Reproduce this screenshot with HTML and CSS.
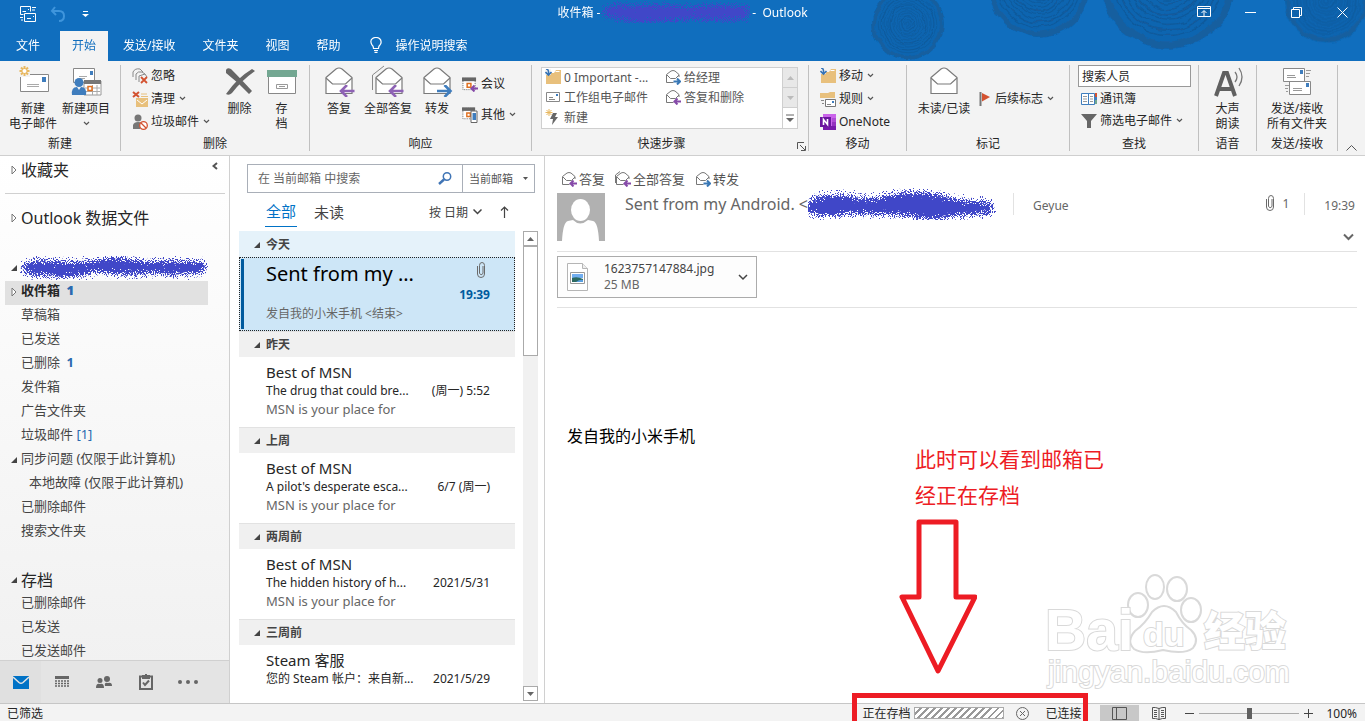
FILE: index.html
```html
<!DOCTYPE html>
<html lang="zh-CN">
<head>
<meta charset="utf-8">
<meta name="viewport" content="width=device-width, initial-scale=1">
<title>收件箱 - Outlook</title>
<link rel="stylesheet" href="styles.css">
</head>
<body>
<svg class="sprite" aria-hidden="true">
  <defs>
    <filter id="spray" x="-5%" y="-40%" width="110%" height="180%">
      <feTurbulence type="fractalNoise" baseFrequency="0.9" numOctaves="2" seed="4"/>
      <feDisplacementMap in="SourceGraphic" scale="22" xChannelSelector="R" yChannelSelector="G"/>
    </filter>
    <filter id="wobble" x="-10%" y="-10%" width="120%" height="120%">
      <feTurbulence type="fractalNoise" baseFrequency="0.06" numOctaves="3" seed="7"/>
      <feDisplacementMap in="SourceGraphic" scale="7" xChannelSelector="R" yChannelSelector="G"/>
    </filter>
    <g id="rings" fill="none" stroke="#125a9c">
      <circle r="50" fill="#1165b0" stroke="none"/>
      <circle r="47" stroke="#145f9f" stroke-width="5"/><circle r="40"/><circle r="36" stroke-width="1.500"/><circle r="32"/><circle r="28"/><circle r="25" stroke-width="1.500"/><circle r="21"/><circle r="17"/><circle r="14"/><circle r="10" stroke-width="1.500"/><circle r="6"/><circle r="3"/>
    </g>
    <symbol id="open-mail" viewBox="0 0 32 32">
      <path d="M3 12.5 13 4q3-2 6 0l10 8.500V28.500H3z" fill="#fff" stroke="#7a7a7a" stroke-width="1.200"/>
      <path d="m3 13 6.500 6h13L29 13" fill="none" stroke="#7a7a7a" stroke-width="1.200"/>
    </symbol>
    <symbol id="arrow-left" viewBox="0 0 16 12"><path d="M15.500 6H3M8 0 2 6l6 6" fill="none" stroke="#8e62b5" stroke-width="2.600"/></symbol>
    <symbol id="arrow-right" viewBox="0 0 16 12"><path d="M.5 6H13M8 0l6 6-6 6" fill="none" stroke="#3f7dbd" stroke-width="2.600"/></symbol>
    <symbol id="mail-sm" viewBox="0 0 16 16"><path d="M1.500 5.500 6 2q2-1 4 0l4 3.500V8M1.500 5.500v8h7M2 6l3.500 3.500h5L14 6" fill="none" stroke="#777"/></symbol>
    <symbol id="reply-sm" viewBox="0 0 16 16"><use href="#mail-sm"/><path d="M16 12.500h-5M12.500 9.500l-3 3 3 3" fill="none" stroke="#8549a8" stroke-width="2"/></symbol>
    <symbol id="forward-sm" viewBox="0 0 16 16"><use href="#mail-sm"/><path d="M8.500 12.500h6M12 9.500l3 3-3 3" fill="none" stroke="#3877b5" stroke-width="2"/></symbol>
    <symbol id="chev" viewBox="0 0 7 7"><path d="m1 2 2.500 2.500L6 2" fill="none" stroke="#555" stroke-width="1.200"/></symbol>
    <symbol id="folder" viewBox="0 0 16 16"><path d="M1 4h8l2-3h5v14H1z" fill="#e8c07c"/><path d="M10.500 2.500h4" stroke="#fff"/><path d="M0 0h6v6H0z" fill="#f3f3f3"/><path d="M1 0q3 0 2.500 5M.5 3l3 3 3-3" fill="none" stroke="#3673b5" stroke-width="1.600"/></symbol>
    <symbol id="open-tri" viewBox="0 0 6 10"><path d="m1 1 4 4-4 4z" fill="#fff" stroke="#777"/></symbol>
    <symbol id="closed-tri" viewBox="0 0 6 6"><path d="M6 0v6H0z" fill="#444"/></symbol>
    <symbol id="clip" viewBox="0 0 8 16"><path d="M6 4v7.500q-2 2.500-3.500 0V3.500q0-3 2.500-3t2.500 3V12q0 3.500-3.500 3.500T.5 12V4" fill="none" stroke="#6a6a6a"/></symbol>
    <symbol id="calendar" viewBox="0 0 16 14"><path d="M1 1h13v12H1z" fill="#fff" stroke="#666" stroke-dasharray="1 1"/><path d="M0 0h15v4H0z" fill="#666"/><path d="M5.500 6.500h4v4h-4z" fill="#fff" stroke="#e07020" stroke-width="1.600"/></symbol>
  </defs>
</svg>

<header class="top">
  <svg class="wood" viewBox="0 0 500 61" aria-hidden="true">
    <g filter="url(#wobble)">
      <use href="#rings" transform="translate(43 24) scale(.72)"/>
      <use href="#rings" transform="translate(174 -14) scale(1.02)"/>
      <use href="#rings" transform="translate(303 -19) scale(1.36)"/>
      <use href="#rings" transform="translate(462 1) scale(.83)"/>
    </g>
  </svg>
  <div class="titlebar">
    <div class="quick">
      <button aria-label="发送/接收"><svg width="16" height="16" viewBox="0 0 16 16" fill="none" stroke="#fff"><path d="M.5.5h10v5M.5.5v8h3M8 3.500h1M2.500 5.500H6M4.500 7.500h11v8h-11zM13 10.500h1M7 12.500h4M12 1.500h4M12 4h3M0 11.500h3M1 14h2"/></svg></button>
      <button aria-label="撤消"><svg width="16" height="16" viewBox="0 0 16 16" fill="none" stroke="#3f95dc" stroke-width="2"><path d="M5 1 2 5l4 4M2 5h7q5 0 5 5t-5 5"/></svg></button>
      <button aria-label="自定义"><svg width="7" height="8" viewBox="0 0 7 8"><path d="M1 1.500h5" stroke="#fff"/><path d="M0 4h7L3.500 7z" fill="#fff"/></svg></button>
    </div>
    <div class="title"><span>收件箱 -</span><svg width="150" height="22" viewBox="0 0 150 22" aria-hidden="true"><path d="M0 11Q10 1 32 5q30-3 55 1 30-4 59 0 6 7-2 12-22 3-54 0-30 4-53 3Q10 20 0 11z" fill="#4046c8" filter="url(#spray)"/></svg><span>-&nbsp; Outlook</span></div>
    <div class="winctl">
      <button aria-label="功能区显示选项"><svg width="14" height="12" viewBox="0 0 14 12" fill="none" stroke="#fff"><path d="M.5.5h13v10H.5zM.5 2.500h13M7 10V5M4.500 7 7 4.500 9.500 7"/></svg></button>
      <button aria-label="最小化"><svg width="11" height="11"><path d="M0 5.500h11" stroke="#fff"/></svg></button>
      <button aria-label="还原"><svg width="11" height="11" viewBox="0 0 11 11" fill="none" stroke="#fff"><path d="M.5 2.500h8v8h-8zM2.500 2.500v-2h8v8h-2"/></svg></button>
      <button aria-label="关闭"><svg width="11" height="11" viewBox="0 0 11 11"><path d="m.5.5 10 10m0-10-10 10" stroke="#fff"/></svg></button>
    </div>
  </div>
  <nav class="tabs">
    <button>文件</button><button class="active">开始</button><button>发送/接收</button><button>文件夹</button><button>视图</button><button>帮助</button>
    <button class="tell"><svg width="12" height="16" viewBox="0 0 12 16" fill="none" stroke="#fff" stroke-width="1.200"><path d="M3.500 11.500Q3.500 9 2 8-.5 3.500 2.500 1.500q3.500-2 7 0Q12.500 4.500 10 8 8.500 9 8.500 11.500zM4 13.500h4M4.500 15.300h3"/></svg>操作说明搜索</button>
  </nav>
</header>

<section class="ribbon">
  <div class="group g-new">
    <div class="tools">
      <button class="big"><svg viewBox="0 0 32 32"><path d="M3.500 9.500h28v17h-28z" fill="#fff" stroke="#888"/><path d="M25 12h4v5h-4z" fill="#3f7dbd"/><path d="M10 19.500h12M10 21.500h12" stroke="#aaa"/><path d="M2 0h11v12H2z" fill="#f3f3f3"/><path d="M7.500 1v10M2.500 6h10M4 2.500l7 7M11 2.500l-7 7" stroke="#e8b860" stroke-width="2"/><circle cx="7.500" cy="6" r="2" fill="#fff"/></svg>新建<br>电子邮件</button>
      <button class="big"><svg viewBox="0 0 32 32"><path d="M3.500 3.500h21v14h-21z" fill="#fff" stroke="#888"/><path d="M20 6h3v4h-3z" fill="#3f7dbd"/><path d="M9 11.500h8M9 13.500h6" stroke="#aaa"/><path d="M14 16h17v14H14z" fill="#fff" stroke="#999"/><path d="M14 15h17v4H14z" fill="#777"/><path d="M15 23h15M15 26.500h15M22.500 20v10M27 20v10" stroke="#aaa"/><path d="M18 21.500h4v4h-4z" fill="#fff" stroke="#e07020" stroke-width="1.500"/><circle cx="9" cy="17.500" r="4.500" fill="#3f7dbd"/><path d="M2 30q-1-8 5-8l2 3 2-3q6 0 5 8z" fill="#3f7dbd"/></svg>新建项目<svg class="chev"><use href="#chev"/></svg></button>
    </div>
    <div class="label">新建</div>
  </div>
  <div class="group g-del">
    <div class="tools">
      <div class="stack">
        <button><svg class="ic" viewBox="0 0 16 16"><path d="M1 9V4q2-4 7-3l3 3M4 12V6q2-3 6-2l3 2M7 14V8l6-2 2 3" fill="none" stroke="#888"/><path d="m9 9 6 6m0-6-6 6" stroke="#d35230" stroke-width="1.800"/></svg>忽略</button>
        <button><svg class="ic" viewBox="0 0 16 16"><path d="M4 7h12v9H4z" fill="#e8c07c"/><path d="M5 9l5 4 5-4" fill="none" stroke="#fff"/><path d="M9 3h6M9 5.500h7" stroke="#e8c07c"/><path d="m1 1 6 5M7 1 1 6" stroke="#d35230" stroke-width="2"/></svg>清理<svg class="chev"><use href="#chev"/></svg></button>
        <button><svg class="ic" viewBox="0 0 16 16"><circle cx="6" cy="4" r="3.500" fill="#777"/><path d="M1 15V11q1-3 5-3 3 0 4 1l-2 6z" fill="#777"/><circle cx="11.500" cy="11.500" r="3.800" fill="#fff" stroke="#d35230" stroke-width="1.300"/><path d="m9 9 5 5" stroke="#d35230" stroke-width="1.300"/></svg>垃圾邮件<svg class="chev"><use href="#chev"/></svg></button>
      </div>
      <button class="big"><svg viewBox="0 0 32 32"><path d="M2 5q1-3 5-1 9 9 21 22l-3 3Q15 18 2 8zM31 6Q18 15 8 28q-3 3-6 1Q13 13 28 4z" fill="#666"/></svg>删除</button>
      <button class="big"><svg viewBox="0 0 32 32"><path d="M2.500 9.500h27v19h-27z" fill="#fff" stroke="#888"/><path d="M1 5h30v7H1z" fill="#73a792"/><path d="M10.500 19.500h11v4h-11zM13 21.500h6" fill="none" stroke="#999"/></svg>存<br>档</button>
    </div>
    <div class="label">删除</div>
  </div>
  <div class="group g-resp">
    <div class="tools">
      <button class="big"><svg viewBox="0 0 32 32"><use href="#open-mail"/><use href="#arrow-left" x="16" y="20" width="16" height="12"/></svg>答复</button>
      <button class="big"><svg viewBox="0 0 32 32"><path d="M.5 25V10L12 1" fill="none" stroke="#888"/><use href="#open-mail" x="1"/><use href="#arrow-left" x="16" y="20" width="16" height="12"/></svg>全部答复</button>
      <button class="big"><svg viewBox="0 0 32 32"><use href="#open-mail"/><use href="#arrow-right" x="15" y="20" width="17" height="12"/></svg>转发</button>
      <div class="stack wide">
        <button><svg class="ic" viewBox="0 0 16 16"><use href="#calendar" width="15" height="14" y="1"/><path d="M16 12.500h-5M12.500 9.500l-3 3 3 3" fill="none" stroke="#8549a8" stroke-width="2"/></svg>会议</button>
        <button><svg class="ic" viewBox="0 0 16 16"><use href="#calendar" width="14" height="13"/><path d="M9 4h6v11.500H9z" fill="#fff" stroke="#666"/><path d="M10.500 6h3.500v7h-3.500z" fill="#3f7dbd"/></svg>其他<svg class="chev"><use href="#chev"/></svg></button>
      </div>
    </div>
    <div class="label">响应</div>
  </div>
  <div class="group g-quick">
    <div class="tools">
      <div class="gallery">
        <div class="steps">
          <button><svg class="ic"><use href="#folder"/></svg>0 Important -...</button>
          <button><svg class="ic"><use href="#forward-sm"/></svg>给经理</button>
          <button><svg class="ic" viewBox="0 0 16 16"><path d="M1.500 3.500h13v9h-13zM4 8.500h4M4 10.500h6" fill="#fff" stroke="#888"/><path d="M11 5h2v2h-2z" fill="#3f7dbd"/></svg>工作组电子邮件</button>
          <button><svg class="ic"><use href="#reply-sm"/></svg>答复和删除</button>
          <button><svg class="ic" viewBox="0 0 16 16"><path d="M4 0v7M.5 3.500h7M1.500 1l5 5M6.500 1l-5 5" stroke="#e8b860"/><path d="M8 4h4l-2 4h3l-6 8 1-6H5z" fill="#666"/></svg>新建</button>
        </div>
        <div class="spin">
          <button aria-label="上一行"><svg width="7" height="4"><path d="M0 4h7L3.500 0z" fill="#bbb"/></svg></button>
          <button aria-label="下一行"><svg width="7" height="4"><path d="M0 0h7L3.500 4z" fill="#bbb"/></svg></button>
          <button aria-label="其他"><svg width="8" height="8"><path d="M0 1h8" stroke="#666"/><path d="M0 4h8L4 8z" fill="#666"/></svg></button>
        </div>
      </div>
    </div>
    <div class="label">快速步骤</div>
    <button class="launch" aria-label="管理快速步骤"><svg width="9" height="9" viewBox="0 0 9 9" fill="none" stroke="#555"><path d="M.5 7V.5H7M3 3l5 5M8.500 4v4.500H4"/></svg></button>
  </div>
  <div class="group g-move">
    <div class="tools">
      <div class="stack">
        <button><svg class="ic"><use href="#folder"/></svg>移动<svg class="chev"><use href="#chev"/></svg></button>
        <button><svg class="ic" viewBox="0 0 16 16"><path d="M0 2h8l2-1h5v6H0z" fill="#e8c07c"/><path d="M5.500 8.500h10v7h-10z" fill="#fff" stroke="#777"/><path d="M12 10h2v2h-2z" fill="#3f7dbd"/><path d="M1 9.500h3M2 12.500h2M7 13.500h4" stroke="#888"/></svg>规则<svg class="chev"><use href="#chev"/></svg></button>
        <button><svg class="ic" viewBox="0 0 16 16"><path d="M3 0h13v16H3z" fill="#ca64ea"/><path d="M12 4h4v4h-4z" fill="#ae4bd5"/><path d="M12 8h4v4h-4z" fill="#9332bf"/><path d="M3 12h13v4H3z" fill="#7719aa"/><path d="M0 3h11v10H0z" fill="#6b169e"/><path d="M3.500 11V5.500l4 5V5" fill="none" stroke="#fff" stroke-width="1.600"/></svg>OneNote</button>
      </div>
    </div>
    <div class="label">移动</div>
  </div>
  <div class="group g-tag">
    <div class="tools">
      <button class="big"><svg viewBox="0 0 32 32"><use href="#open-mail"/></svg>未读/已读</button>
      <div class="stack mid">
        <button><svg class="ic" viewBox="0 0 16 16"><path d="M2.500 1v14" stroke="#777" stroke-width="2"/><path d="m4 2 8 4-8 4.500z" fill="#d35230"/></svg>后续标志<svg class="chev"><use href="#chev"/></svg></button>
      </div>
    </div>
    <div class="label">标记</div>
  </div>
  <div class="group g-find">
    <div class="tools">
      <div class="stack">
        <input class="people" type="text" value="搜索人员" aria-label="搜索人员">
        <button><svg class="ic" viewBox="0 0 16 16"><path d="M.5 2.500h7v11h-7zM7.500 2.500h6v11h-6z" fill="#fff" stroke="#3f7dbd"/><path d="M2 5.500h4M2 8h4M2 10.500h4M9 5.500h3M9 8h3M9 10.500h3" stroke="#999"/><path d="M15 2v4" stroke="#d35230" stroke-width="2"/><path d="M15 6v3" stroke="#3f7dbd" stroke-width="2"/><path d="M15 9v4" stroke="#73a792" stroke-width="2"/></svg>通讯簿</button>
        <button><svg class="ic" viewBox="0 0 16 16"><path d="M0 1h16L10 8v7H6V8z" fill="#666"/></svg>筛选电子邮件<svg class="chev"><use href="#chev"/></svg></button>
      </div>
    </div>
    <div class="label">查找</div>
  </div>
  <div class="group g-voice">
    <div class="tools">
      <button class="big"><svg viewBox="0 0 32 32"><path d="M4 31 12 8h3l8 23m-17-7h15" fill="none" stroke="#606060" stroke-width="4"/><path d="M23 7q4 5 0 10M27 3q6 9 0 18" fill="none" stroke="#777" stroke-width="1.300"/></svg>大声<br>朗读</button>
    </div>
    <div class="label">语音</div>
  </div>
  <div class="group g-send">
    <div class="tools">
      <button class="big"><svg viewBox="0 0 32 32" fill="none"><path d="M2.500 3.500h21v13h-21zM8.500 16.500h21v13h-21z" fill="#fff" stroke="#888"/><path d="M19 5h3v4h-3zM25 18h3v4h-3z" fill="#3f7dbd"/><path d="M6 10.500h8M6 12.500h9M12 23.500h9M12 25.500h9M25 5.500h5M25 8.500h4M25 11.500h3M4 20.500h4M4 23.500h3M5 26.500h2" stroke="#999"/></svg>发送/接收<br>所有文件夹</button>
    </div>
    <div class="label">发送/接收</div>
  </div>
  <button class="collapse" aria-label="折叠功能区"><svg width="11" height="6"><path d="M.5 5.500 5.500.5l5 5" fill="none" stroke="#555"/></svg></button>
</section>

<main class="work">
  <aside class="folders">
    <div class="tree">
      <div class="head fav"><svg class="tri"><use href="#open-tri"/></svg>收藏夹<button class="fold" aria-label="最小化文件夹窗格"><svg width="6" height="8"><path d="M5 1 1.500 4 5 7" fill="none" stroke="#555" stroke-width="2"/></svg></button></div>
      <div class="head data"><svg class="tri"><use href="#open-tri"/></svg>Outlook 数据文件</div>
      <div class="head account"><svg class="tri"><use href="#closed-tri"/></svg><svg width="188" height="24" viewBox="0 0 188 24" aria-hidden="true"><path d="M0 12Q8 2 38 5q22 3 48-3 20-1 40 4 22-3 58 0 6 8-2 11-30 3-48 0-30 4-58-1-20 7-48 4Q5 21 0 12z" fill="#4046c8" filter="url(#spray)"/></svg></div>
      <ul>
        <li class="sel"><a href="#inbox"><svg class="tri"><use href="#open-tri"/></svg>收件箱 <b>1</b></a></li>
        <li><a href="#draft">草稿箱</a></li>
        <li><a href="#sent">已发送</a></li>
        <li><a href="#deleted">已删除 <b>1</b></a></li>
        <li><a href="#outbox">发件箱</a></li>
        <li><a href="#ads">广告文件夹</a></li>
        <li><a href="#junk">垃圾邮件 <i>[1]</i></a></li>
        <li><a href="#sync"><svg class="tri"><use href="#closed-tri"/></svg>同步问题 (仅限于此计算机)</a></li>
        <li class="child"><a href="#local">本地故障 (仅限于此计算机)</a></li>
        <li><a href="#deleted-mail">已删除邮件</a></li>
        <li><a href="#search">搜索文件夹</a></li>
      </ul>
      <div class="head archive"><svg class="tri"><use href="#closed-tri"/></svg>存档</div>
      <ul>
        <li><a href="#a1">已删除邮件</a></li>
        <li><a href="#a2">已发送</a></li>
        <li><a href="#a3">已发送邮件</a></li>
      </ul>
    </div>
    <nav class="modules">
      <button class="on" aria-label="邮件"><svg width="16" height="13"><path d="M0 0h16v13H0z" fill="#0072c6"/><path d="m0 1 6 5.500q2 1.500 4 0L16 1" fill="none" stroke="#e4e4e4" stroke-width="1.500"/></svg></button>
      <button aria-label="日历"><svg width="14" height="12"><path d="M0 1.500h14" stroke="#666" stroke-width="3"/><path d="M0 5h14M0 7.500h14M0 10h14" stroke="#666" stroke-width="1.500" stroke-dasharray="2 1"/></svg></button>
      <button aria-label="联系人"><svg width="16" height="12" fill="#666"><circle cx="4" cy="4.500" r="2.500"/><circle cx="11" cy="3" r="3"/><path d="M0 12q0-5 4-4 4-1 4 4zM9 10q-1-4 3-3 4-1 4 3z"/></svg></button>
      <button aria-label="任务"><svg width="14" height="16" fill="none" stroke="#666" stroke-width="2"><path d="M4 2.500H1V15h12V2.500h-3M4 8.500l2 2.500 4-4.500"/><path d="M4 2h6v2H4zM7 0v2"/></svg></button>
      <button aria-label="更多"><svg width="20" height="4" fill="#666"><circle cx="2" cy="2" r="2"/><circle cx="10" cy="2" r="2"/><circle cx="18" cy="2" r="2"/></svg></button>
    </nav>
  </aside>

  <section class="list">
    <div class="search">
      <input type="search" placeholder="在 当前邮箱 中搜索" aria-label="在 当前邮箱 中搜索">
      <button class="glass" aria-label="搜索"><svg width="14" height="13" fill="none" stroke="#3f74b5"><circle cx="9" cy="4.500" r="3.700" stroke-width="1.500"/><path d="M6 7.500 1 12" stroke-width="2.400"/></svg></button>
      <button class="scope">当前邮箱<svg width="5" height="3"><path d="M0 0h5L2.500 3z" fill="#555"/></svg></button>
    </div>
    <div class="filter">
      <button class="on">全部</button><button>未读</button>
      <button class="sort">按 日期<svg width="9" height="6"><path d="m.5.5 4 4 4-4" fill="none" stroke="#444" stroke-width="1.500"/></svg></button>
      <button class="dir" aria-label="升序"><svg width="9" height="12"><path d="M4.500 12V1M1 4.500 4.500 1 8 4.500" fill="none" stroke="#444" stroke-width="1.200"/></svg></button>
    </div>
    <div class="scroller">
      <div class="mails">
        <div class="day today"><svg class="tri"><use href="#closed-tri"/></svg>今天</div>
        <article class="mail current"><h3>Sent from my ...</h3><svg class="att" width="8" height="16"><use href="#clip"/></svg><time>19:39</time><p>发自我的小米手机 &lt;结束&gt;</p></article>
        <div class="day"><svg class="tri"><use href="#closed-tri"/></svg>昨天</div>
        <article class="mail"><h3>Best of MSN</h3><div class="row"><span>The drug that could bre...</span><time>(周一) 5:52</time></div><p>MSN is your place for</p></article>
        <div class="day"><svg class="tri"><use href="#closed-tri"/></svg>上周</div>
        <article class="mail"><h3>Best of MSN</h3><div class="row"><span>A pilot's desperate esca...</span><time>6/7 (周一)</time></div><p>MSN is your place for</p></article>
        <div class="day"><svg class="tri"><use href="#closed-tri"/></svg>两周前</div>
        <article class="mail"><h3>Best of MSN</h3><div class="row"><span>The hidden history of h...</span><time>2021/5/31</time></div><p>MSN is your place for</p></article>
        <div class="day"><svg class="tri"><use href="#closed-tri"/></svg>三周前</div>
        <article class="mail"><h3>Steam 客服</h3><div class="row"><span>您的 Steam 帐户：来自新...</span><time>2021/5/29</time></div></article>
      </div>
      <div class="bar">
        <button aria-label="向上滚动"><svg width="7" height="4"><path d="M0 4h7L3.500 0z" fill="#666"/></svg></button>
        <div class="thumb"></div>
        <button class="down" aria-label="向下滚动"><svg width="7" height="4"><path d="M0 0h7L3.500 4z" fill="#666"/></svg></button>
      </div>
    </div>
  </section>

  <section class="reader">
    <div class="actions">
      <button><svg class="ic"><use href="#reply-sm"/></svg>答复</button>
      <button><svg class="ic" viewBox="0 0 16 16"><path d="M.5 12V4L5 .5" fill="none" stroke="#777"/><use href="#reply-sm"/></svg>全部答复</button>
      <button><svg class="ic"><use href="#forward-sm"/></svg>转发</button>
    </div>
    <div class="mailhead">
      <svg class="avatar" viewBox="0 0 48 48" aria-hidden="true"><path d="M0 0h48v48H0z" fill="#b1b1b1"/><ellipse cx="23.500" cy="17" rx="9.500" ry="11" fill="#fff"/><path d="M5 48Q6 29 11 28l5-1q7 7 15 0l5 1q5 1 6 20z" fill="#fff"/></svg>
      <div class="from"><span>Sent from my Android. &lt;</span><svg width="188" height="32" viewBox="0 0 188 32" aria-hidden="true"><path d="M-4 18Q8 4 36 7q20 6 40 1 30-8 58 0 20 6 47 5 6 6 2 13-22 1-40 3-22 5-43-1-28-2-56-2-26 4-38 0Q-2 25-4 18z" fill="#4046c8" filter="url(#spray)"/></svg></div>
      <div class="to">Geyue</div>
      <div class="count"><svg width="8" height="16"><use href="#clip"/></svg>1</div>
      <time>19:39</time>
      <button class="expand" aria-label="展开"><svg width="11" height="8"><path d="m1 1.500 4.500 4.500L10 1.500" fill="none" stroke="#666" stroke-width="2"/></svg></button>
    </div>
    <div class="files">
      <button class="file">
        <svg width="21" height="28" viewBox="0 0 21 28"><path d="M.5.5h15l5 5v22H.5z" fill="#fff" stroke="#b5b5b5"/><path d="M15.500.5v5h5" fill="#eee" stroke="#b5b5b5"/><path d="M3.500 9.500h14v11h-14z" fill="#fff" stroke="#999"/><path d="M5 11h11v4H5z" fill="#72aef0"/><path d="M5 15q5-2 11 1v3H5z" fill="#2c6a62"/><path d="M9 19q4-3 7-2v2z" fill="#5a9fe0"/></svg>
        <span class="meta"><span>1623757147884.jpg</span><small>25 MB</small></span>
        <svg width="10" height="7"><path d="m1 1 4 4 4-4" fill="none" stroke="#444" stroke-width="1.500"/></svg>
      </button>
    </div>
    <p class="text">发自我的小米手机</p>

    <div class="note">
      <p>此时可以看到邮箱已<br>经正在存档</p>
      <svg width="78" height="158" viewBox="0 0 78 158" aria-hidden="true"><path d="M20 3h37v75h19L39 152 3 78h17z" fill="none" stroke="#ed1c24" stroke-width="5" stroke-linejoin="round"/></svg>
    </div>
    <svg class="mark" width="250" height="122" viewBox="0 0 250 122" aria-label="Baidu 经验 jingyan.baidu.com">
      <g fill="#fff" stroke="#d9d9d9" stroke-width="2">
        <ellipse cx="110" cy="16" rx="9" ry="12"/><ellipse cx="132" cy="18" rx="10" ry="12"/><ellipse cx="93" cy="34" rx="10" ry="12"/><ellipse cx="146" cy="39" rx="10" ry="12"/>
        <path d="M90 60q10-7 17-19 12-12 24 0 6 12 15 18 9 9 2 18-9 7-30 2-20 5-29-1-8-8 1-18z"/>
      </g>
      <g class="logo"><text x="0" y="79" font-size="57" font-weight="700">Bai</text><text x="98" y="75" font-size="34" font-weight="700">du</text></g>
      <text class="cn" x="159" y="75" font-size="41">经验</text>
      <text class="url" x="3" y="111" font-size="30">jingyan.baidu.com</text>
    </svg>
  </section>
</main>

<footer class="status">
  <span>已筛选</span>
  <div class="sync">
    <span>正在存档</span>
    <span class="progress" role="progressbar" aria-label="正在存档"></span>
    <button aria-label="取消"><svg width="13" height="13" fill="none" stroke="#666"><circle cx="6.500" cy="6.500" r="6"/><path d="m4 4 5 5m0-5-5 5"/></svg></button>
    <span>已连接</span>
    <div class="frame"></div>
  </div>
  <button class="view on" aria-label="普通"><svg width="15" height="13" fill="none" stroke="#555"><path d="M.5.5h14v12H.5zM4.500.5v12"/></svg></button>
  <button class="view" aria-label="阅读"><svg width="14" height="13" fill="none" stroke="#555"><path d="M7 1.500Q3 0 .5.500v11q3-.5 6.500 1 3.500-1.500 6.500-1V.5Q10 0 7 1.500zV13M2 3.500h3M2 5.500h3M2 7.500h3M2 9.500h3M9 3.500h3M9 5.500h3M9 7.500h3M9 9.500h3"/></svg></button>
  <div class="zoom">
    <button aria-label="缩小"><svg width="9" height="9"><path d="M0 4.500h9" stroke="#444"/></svg></button>
    <input type="range" min="0" max="100" value="50" aria-label="缩放">
    <button aria-label="放大"><svg width="9" height="9"><path d="M0 4.500h9M4.500 0v9" stroke="#444"/></svg></button>
  </div>
  <span class="pct">100%</span>
</footer>
</body>
</html>
```

FILE: styles.css
```css
* { box-sizing: border-box; }
html, body { height: 100%; }
body {
  margin: 0;
  display: flex;
  flex-direction: column;
  overflow: hidden;
  font: 12px/15px "Noto Sans", "Noto Sans CJK SC", sans-serif;
  color: #262626;
  background: #fff;
}
button {
  display: inline-flex;
  align-items: center;
  justify-content: center;
  margin: 0;
  padding: 0;
  border: 0;
  background: none;
  font: inherit;
  color: inherit;
  white-space: nowrap;
}
h3, p, ul { margin: 0; padding: 0; font-weight: 400; }
ul { list-style: none; }
a { color: inherit; text-decoration: none; }
svg { flex: none; display: block; }
.sprite { position: absolute; width: 0; height: 0; }
.ic { width: 16px; height: 16px; margin-right: 3px; }
.chev { width: 7px; height: 7px; margin-left: 4px; }

/* Title bar and tabs */
.top { position: relative; overflow: hidden; background: #106ebe; color: #fff; }
.wood { position: absolute; top: 0; right: 0; width: 500px; height: 61px; }
.titlebar { position: relative; display: grid; grid-template-columns: 1fr auto 1fr; align-items: center; height: 31px; padding-bottom: 7px; }
.quick { display: flex; align-items: center; gap: 14px; padding: 4px 0 0 20px; }
.quick button:last-child { margin-left: 2px; }
.title { display: flex; align-items: center; gap: 1px; }
.winctl { display: flex; justify-content: flex-end; }
.winctl button { width: 46px; height: 24px; }
.tabs { position: relative; display: flex; gap: 1px; height: 30px; padding: 0 3px; }
.tabs button { padding: 0 13px 2px; }
.tabs .active { margin-left: 6px; padding: 0 12px 2px; background: #f3f3f3; color: #106ebe; }
.tabs button:nth-child(3) { margin-left: 1px; }
.tabs .tell { gap: 14px; margin-left: 2px; }

/* Ribbon */
.ribbon { display: flex; padding: 4px 0; background: #f3f3f3; border-bottom: 1px solid #cfcfcf; flex: none; }
.group { position: relative; display: flex; flex-direction: column; flex: none; height: 86px; border-right: 1px solid #c0c0c0; }
.tools { display: flex; align-items: flex-start; flex: none; height: 71px; }
.label { text-align: center; line-height: 16px; }
.big { display: block; text-align: center; line-height: 15px; }
.big > svg:first-child { width: 32px; height: 32px; margin: 0 auto 4px; }
.big .chev { margin: 4px auto 0; }
.stack { display: flex; flex-direction: column; gap: 2px; }
.stack button { justify-content: flex-start; height: 21px; }
.stack.wide { gap: 10px; padding-top: 8px; }
.stack.mid { padding-top: 23px; }
.g-new { width: 121px; }
.g-new .tools { padding-left: 8px; gap: 3px; }
.g-new .big { width: 50px; }
.g-del { width: 189px; }
.g-del .tools { padding-left: 11px; }
.g-del .stack { width: 90px; }
.g-del .big { width: 35px; }
.g-del .big:last-child { margin-left: 7px; }
.g-resp { width: 222px; }
.g-resp .tools { padding-left: 11px; }
.g-resp .big { width: 36px; }
.g-resp .big:nth-child(2) { width: 62px; }
.g-resp .stack { margin-left: 7px; }
.g-quick { width: 277px; }
.g-quick .tools { padding: 2px 10px 0 9px; }
.g-quick .label { padding-right: 17px; }
.gallery { display: flex; width: 100%; height: 62px; background: #fff; border: 1px solid #cfcfcf; }
.steps { flex: 1; display: grid; grid-template-columns: 120px 1fr; grid-auto-rows: 20px; color: #555; padding-left: 3px; }
.steps button { justify-content: flex-start; padding-bottom: 2px; }
.spin { width: 15px; display: grid; grid-template-rows: 1fr 1fr 1fr; border-left: 1px solid #cfcfcf; }
.spin button { background: #e8e8e8; border-bottom: 1px solid #cfcfcf; }
.spin button:last-child { background: #fff; border-bottom: 0; }
.launch { position: absolute; right: 2px; bottom: 0; }
.g-move { width: 98px; }
.g-move .tools { padding-left: 11px; }
.g-tag { width: 163px; }
.g-tag .tools { padding-left: 8px; }
.g-tag .big { width: 58px; }
.g-tag .stack { margin-left: 5px; }
.g-tag .ic { margin-right: 1px; }
.g-find { width: 129px; }
.g-find .tools { padding-left: 8px; }
.g-find .stack { gap: 1px; }
.g-find .stack button { padding-left: 3px; }
.people { width: 113px; height: 22px; padding: 0 3px; border: 1px solid #999; background: #fff; font: inherit; color: inherit; }
.g-voice { width: 58px; }
.g-send { width: 81px; }
.g-voice .tools, .g-send .tools { justify-content: center; }
.collapse { margin-left: auto; align-self: flex-end; padding-right: 8px; }

/* Panes */
.work { flex: 1; display: grid; grid-template-columns: 230px 315px minmax(0, 1fr); min-height: 0; }
.work > * { min-height: 0; }
.folders { position: relative; display: flex; flex-direction: column; background: linear-gradient(#fff, #f0f0f0); border-right: 1px solid #d0d0d0; font-size: 13px; color: #444; }
.tree { flex: 1; min-height: 0; overflow: hidden; }
.tri { width: 6px; height: 10px; margin-right: 4px; }
.head { display: flex; align-items: center; height: 24px; padding-left: 11px; font-size: 16px; color: #262626; }
.fav { height: 28px; padding-right: 11px; }
.fold { margin: 0 0 8px auto; }
.data { position: relative; margin-top: 22px; }
.data::before { content: ""; position: absolute; left: 5px; right: 4px; top: -13px; border-top: 1px solid #d0d0d0; }
.account { margin-top: 26px; margin-bottom: 1px; }
.account .tri { margin-right: 3px; }
.archive { margin-top: 23px; margin-bottom: 1px; }
.tree li { height: 24px; margin: 0 21px 0 5px; padding-left: 16px; line-height: 18px; }
.tree li a { display: flex; white-space: pre; }
.tree li .tri { margin: 6px 4px 0 -10px; }
.tree li.child { padding-left: 24px; }
.tree li.sel { background: #e1e1e1; font-weight: 700; color: #262626; }
.tree b, .tree i { font-style: normal; color: #2a6ab0; }
.tree b { margin-left: 3px; }
.modules { display: flex; height: 43px; flex: none; background: #e4e4e4; border-top: 1px solid #d0d0d0; }
.modules button { width: 42px; }
.modules .on { width: 41px; background: #e0e0e0; }

.list { display: flex; flex-direction: column; border-right: 1px solid #d0d0d0; }
.search { display: flex; height: 29px; margin: 8px 9px 0 17px; border: 1px solid #a9afb8; flex: none; color: #555; }
.search input { flex: 1; min-width: 0; border: 0; padding: 0 10px; font: inherit; background: none; }
.search input::placeholder { color: #666; opacity: 1; }
.glass { width: 34px; }
.scope { width: 72px; border-left: 1px solid #a9afb8; gap: 10px; font-size: 11px; }
.filter { display: flex; height: 38px; flex: none; padding: 0 30px 4px 35px; color: #444; }
.filter button { padding: 4px 1px 0; font-size: 15px; }
.filter button + button { margin-left: 16px; }
.filter .on { color: #0072c6; border-bottom: 1px solid #0072c6; }
.filter .sort { margin-left: auto; font-size: 12px; gap: 5px; }
.filter .dir { padding-right: 5px; }
.scroller { flex: 1; min-height: 0; display: flex; gap: 8px; padding: 0 6px 2px 9px; }
.mails { flex: 1; overflow: hidden; }
.day { display: flex; align-items: center; height: 26px; padding: 0 0 0 15px; background: #f0f0f0; border-top: 1px solid #e2e2e2; font-weight: 700; color: #444; }
.day .tri { height: 6px; margin-right: 6px; }
.day.today { background: #e5f2fa; border-top-color: #e5f2fa; }
.mail { height: 70px; padding: 6px 25px 0 27px; color: #262626; }
.mail h3 { font-size: 15px; line-height: 19px; }
.mail .row { display: flex; justify-content: space-between; line-height: 18px; white-space: nowrap; }
.mail p { font-size: 13px; line-height: 19px; color: #666; }
.current { position: relative; display: grid; grid-template-columns: 1fr auto; grid-template-rows: 26px 14px 24px; height: 74px; padding: 4px 24px 0 26px; background: #cde6f7; border: 1px dotted #222; }
.current::before { content: ""; position: absolute; left: 1px; top: 1px; bottom: 1px; width: 3px; background: #005a9e; }
.current h3 { font-size: 20px; line-height: 24px; color: #000; }
.current .att { justify-self: end; margin-right: 5px; }
.current time { grid-column: 2; font-weight: 700; line-height: 14px; color: #005a9e; }
.current p { grid-column: 1 / 3; font-size: 12px; line-height: 24px; }
.bar { width: 15px; display: flex; flex-direction: column; background: #f1f1f1; }
.bar button, .thumb { border: 1px solid #aaa; background: #fff; }
.bar button { height: 15px; }
.thumb { height: 110px; }
.bar .down { margin-top: auto; }

.reader { position: relative; padding: 14px 8px 0 12px; }
.actions { display: flex; gap: 10px; height: 18px; padding-left: 4px; font-size: 13px; color: #555; }
.actions .ic { margin-right: 2px; }
.mailhead { display: grid; grid-template-columns: 48px auto auto 1fr auto; grid-template-rows: 26px 32px; height: 59px; margin-top: 5px; color: #666; border-bottom: 1px solid #e2e2e2; }
.avatar { grid-row: 1 / 3; width: 48px; height: 48px; }
.from { display: flex; align-items: center; height: 22px; margin-left: 20px; font-size: 16px; color: #666; white-space: pre; }
.to, .mailhead time { height: 22px; line-height: 25px; border-left: 1px solid #e2e2e2; padding-left: 19px; }
.to { margin-left: 17px; }
.mailhead time { padding-right: 2px; }
.count { display: flex; justify-content: flex-end; align-items: center; gap: 8px; height: 20px; padding-right: 15px; }
.expand { grid-column: 5; grid-row: 2; justify-self: end; align-self: start; margin: 14px 3px 0 0; }
.files { padding: 4px 0 9px; border-bottom: 1px solid #e2e2e2; }
.file { width: 200px; height: 42px; padding: 0 8px 0 9px; border: 1px solid #ababab; background: #fdfdfd; color: #444; }
.meta { flex: 1; margin-left: 16px; text-align: left; line-height: 16px; }
.meta span, .meta small { display: block; font-size: 12px; }
.meta small { color: #666; }
.text { margin: 116px 0 0 10px; font-size: 16px; line-height: 24px; color: #000; }

/* Marked-up explanation lying over the message */
.note { position: absolute; left: 370px; top: 285px; color: #ed1c24; font-size: 21px; line-height: 36px; }
.note svg { margin: 6px 0 0 -16px; }
.mark { position: absolute; right: 70px; bottom: 10px; overflow: visible; }
.mark text { fill: #fff; stroke: #d9d9d9; stroke-width: 2px; paint-order: stroke; }
.mark .logo text { font-family: "Liberation Sans", sans-serif; }
.mark .cn { font-family: "Noto Sans CJK SC", sans-serif; font-weight: 900; }
.mark .url { font-family: "Liberation Sans", sans-serif; font-weight: 400; }

/* Status bar */
.status { position: relative; display: flex; align-items: center; flex: none; height: 18px; padding: 1px 8px 0 7px; background: #f3f3f3; border-top: 1px solid #c6c6c6; white-space: nowrap; }
.status > * { flex: none; }
.sync { position: relative; display: flex; align-items: center; margin-left: auto; }
.progress { width: 90px; height: 12px; margin: 0 12px 0 4px; border: 1px solid #aaa; background: repeating-linear-gradient(135deg, #fff 0 3px, #999 3px 5px); }
.sync button { margin-right: 16px; }
.frame { position: absolute; left: -10px; right: -7px; top: -13px; height: 40px; border: 5px solid #ed1c24; }
.view { width: 39px; height: 17px; }
.view.on { margin-left: 19px; background: #c8c8c8; }
.zoom { display: flex; align-items: center; gap: 5px; margin-left: 7px; }
.zoom input { appearance: none; width: 100px; height: 12px; margin: 0; background: linear-gradient(#aaa, #aaa) center / 100% 1px no-repeat; }
.zoom input::-webkit-slider-thumb { appearance: none; width: 5px; height: 11px; background: #606060; }
.pct { margin-left: 13px; }
```
